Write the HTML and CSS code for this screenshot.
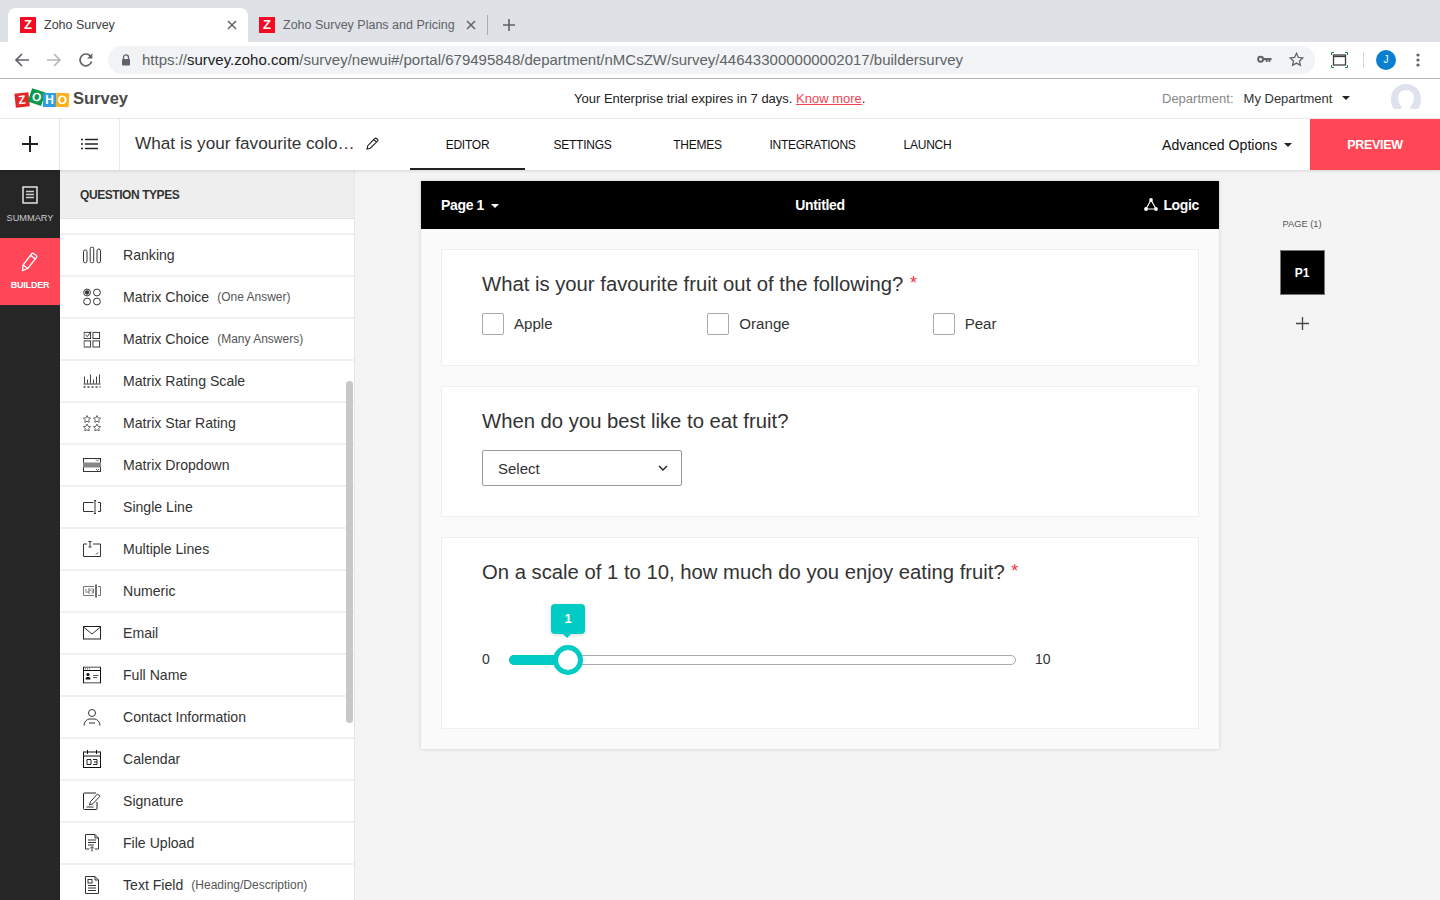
FILE: index.html
```html
<!DOCTYPE html>
<html lang="en">
<head>
  <meta charset="UTF-8">
  <meta name="viewport" content="width=device-width, initial-scale=1.0">
  <title>Zoho Survey</title>
  <link rel="stylesheet" href="styles.css">
</head>
<body>

<div class="tabstrip">
  <div class="tab tab-active">
    <span class="favicon">Z</span>
    <span class="tab-title">Zoho Survey</span>
    <svg class="tab-close" width="10" height="10" viewBox="0 0 10 10"><path d="M1 1l8 8M9 1l-8 8" stroke="#5f6368" stroke-width="1.5"/></svg>
  </div>
  <div class="tab tab-other">
    <span class="favicon">Z</span>
    <span class="tab-title">Zoho Survey Plans and Pricing</span>
    <svg class="tab-close" width="10" height="10" viewBox="0 0 10 10"><path d="M1 1l8 8M9 1l-8 8" stroke="#5f6368" stroke-width="1.5"/></svg>
  </div>
  <span class="tab-divider"></span>
  <svg class="new-tab" width="12" height="12" viewBox="0 0 12 12"><path d="M6 0v12M0 6h12" stroke="#5f6368" stroke-width="1.6"/></svg>
</div>

<div class="toolbar">
  <svg class="tool-icon" width="16" height="16" viewBox="0 0 16 16"><path d="M15 8H2M8 2L2 8l6 6" fill="none" stroke="#5f6368" stroke-width="1.7"/></svg>
  <svg class="tool-icon" width="16" height="16" viewBox="0 0 16 16"><path d="M1 8h13M8 2l6 6-6 6" fill="none" stroke="#b4b6b9" stroke-width="1.7"/></svg>
  <svg class="tool-icon" width="16" height="16" viewBox="0 0 16 16"><path d="M13.6 9.6A5.9 5.9 0 1 1 12.2 3.8" fill="none" stroke="#5f6368" stroke-width="1.7"/><path d="M14.4 1.2v5.4H9z" fill="#5f6368"/></svg>
  <div class="omnibox">
    <svg width="10" height="12" viewBox="0 0 10 12"><path d="M2.5 5V3.4a2.5 2.5 0 0 1 5 0V5" fill="none" stroke="#5f6368" stroke-width="1.3"/><rect x="1" y="5" width="8" height="6.5" rx=".8" fill="#5f6368"/></svg>
    <span class="url">https://<b>survey.zoho.com</b>/survey/newui#/portal/679495848/department/nMCsZW/survey/446433000000002017/buildersurvey</span>
    <svg class="omni-key" width="15" height="9" viewBox="0 0 15 9"><circle cx="3.6" cy="4.2" r="2.5" fill="none" stroke="#5f6368" stroke-width="1.9"/><path d="M6 3h8.5v2.2h-1.2V7h-1.8V5.2h-1V7H8.800V5.2H6z" fill="#5f6368"/></svg>
    <svg class="omni-star" width="15" height="15" viewBox="0 0 15 15"><path d="M7.5 1.3l1.9 4.1 4.4.5-3.3 3 .9 4.4-3.9-2.2-3.9 2.2.9-4.4-3.3-3 4.4-.5z" fill="none" stroke="#5f6368" stroke-width="1.3"/></svg>
  </div>
  <svg class="screen-icon" width="17" height="16" viewBox="0 0 17 16"><rect x="2.5" y="3" width="12" height="10" fill="none" stroke="#3c4043" stroke-width="1.3"/><path d="M2.5 4.5h12" stroke="#3c4043" stroke-width="1.3"/><path d="M0.5 3V.5H3M14 .5h2.5V3M.5 13v2.5H3M14 15.500h2.500V13" fill="none" stroke="#1a8a3a" stroke-width="1"/></svg>
  <span class="tool-divider"></span>
  <span class="avatar">J</span>
  <svg class="dots" width="4" height="14" viewBox="0 0 4 14"><circle cx="2" cy="2" r="1.6" fill="#5f6368"/><circle cx="2" cy="7" r="1.6" fill="#5f6368"/><circle cx="2" cy="12" r="1.6" fill="#5f6368"/></svg>
</div>

<header class="app-header">
  <div class="brand">
    <span class="logo">
      <span class="logo-tile tile-z">Z</span>
      <span class="logo-tile tile-o">O</span>
      <span class="logo-tile tile-h">H</span>
      <span class="logo-tile tile-y">O</span>
    </span>
    <span class="brand-name">Survey</span>
  </div>
  <div class="trial">Your Enterprise trial expires in 7 days. <a href="#">Know more</a>.</div>
  <div class="dept">
    <span class="dept-label">Department:</span>
    <span class="dept-name">My Department</span>
    <span class="caret caret-dept"></span>
  </div>
  <svg class="user-pic" width="30" height="25" viewBox="0 0 30 25"><path d="M15 0C6.500 0 0 6.500 0 15c0 4 1 7.500 3 10h7.500v-2.500C8.500 20.500 7 17 7 13.500 7 9 10.500 6 15 6s8 3 8 7.500c0 3.500-1.500 7-3.500 9V25H27c2-2.500 3-6 3-10C30 6.500 23.500 0 15 0z" fill="#dee2ec"/></svg>
</header>

<nav class="nav">
  <div class="nav-btn">
    <svg width="18" height="18" viewBox="0 0 18 18"><path d="M9 1v16M1 9h16" stroke="#222" stroke-width="2"/></svg>
  </div>
  <div class="nav-btn">
    <svg width="17" height="12" viewBox="0 0 17 12"><path d="M4 1.500h13M4 6h13M4 10.500h13" stroke="#222" stroke-width="1.500"/><path d="M0 1.500h2M0 6h2M0 10.500h2" stroke="#222" stroke-width="1.500"/></svg>
  </div>
  <div class="survey-title">
    <span>What is your favourite colo…</span>
    <svg width="13" height="13" viewBox="0 0 13 13"><path d="M1 12l.8-3.300L8.800 1.500c.5-.5 1.200-.5 1.700 0l1 1c.5.500.5 1.200 0 1.700L4.300 11.200zM7.800 2.500l2.700 2.700" fill="none" stroke="#222" stroke-width="1.100"/></svg>
  </div>
  <ul class="nav-tabs">
    <li class="nav-tab nav-tab-active">EDITOR</li>
    <li class="nav-tab">SETTINGS</li>
    <li class="nav-tab">THEMES</li>
    <li class="nav-tab">INTEGRATIONS</li>
    <li class="nav-tab">LAUNCH</li>
  </ul>
  <div class="advanced">Advanced Options <span class="caret caret-adv"></span></div>
  <div class="preview">PREVIEW</div>
</nav>

<div class="main">
  <aside class="rail">
    <div class="rail-item rail-summary">
      <svg width="16" height="18" viewBox="0 0 16 18"><rect x="1" y="1" width="14" height="16" fill="none" stroke="#fff" stroke-width="1.300"/><path d="M4 5.500h8M4 8.500h8M4 11.500h8" stroke="#ccc" stroke-width="1.300"/></svg>
      <span>SUMMARY</span>
    </div>
    <div class="rail-item rail-item-active">
      <svg width="18" height="20" viewBox="0 0 18 20"><path d="M1.500 18.500l.6-5.500L10.500 2c.6-.8 1.500-.9 2.300-.3l2.200 1.600c.8.600.9 1.500.3 2.300L6.800 16.500zM2.100 13l4.700 3.500M9.500 3.400l4.700 3.400" fill="none" stroke="#fff" stroke-width="1.300"/></svg>
      <span>BUILDER</span>
    </div>
  </aside>

  <section class="panel">
    <div class="panel-head">QUESTION TYPES</div>
    <ul class="type-list">
      <li class="type-row type-row-cut"></li>
      <li class="type-row">
        <svg class="type-icon" width="18" height="17" viewBox="0 0 18 17"><g fill="none" stroke="#333" stroke-width="1"><rect x=".5" y="3.500" width="3.500" height="13" rx="1.700"/><rect x="7.200" y=".5" width="3.500" height="16" rx="1.700"/><rect x="14" y="2.500" width="3.500" height="14" rx="1.700"/></g></svg>
        <span>Ranking</span>
      </li>
      <li class="type-row">
        <svg class="type-icon" width="18" height="18" viewBox="0 0 20 20"><g fill="none" stroke="#333" stroke-width="1.100"><circle cx="4.500" cy="5" r="3.800"/><circle cx="15.500" cy="5" r="3.800"/><circle cx="4.500" cy="15" r="3.800"/><circle cx="15.500" cy="15" r="3.800"/></g><circle cx="4.500" cy="5" r="2.400" fill="#333"/></svg>
        <span>Matrix Choice</span><small>(One Answer)</small>
      </li>
      <li class="type-row">
        <svg class="type-icon" width="17" height="18" viewBox="0 0 18 18"><g fill="none" stroke="#333" stroke-width="1"><rect x=".5" y="2" width="7" height="6.500"/><rect x="10" y="2" width="7" height="6.500"/><rect x=".5" y="11" width="7" height="6.500"/><rect x="10" y="11" width="7" height="6.500"/><path d="M2 4.500l2 2 4-5.500"/></g></svg>
        <span>Matrix Choice</span><small>(Many Answers)</small>
      </li>
      <li class="type-row">
        <svg class="type-icon" width="18" height="15" viewBox="0 0 18 15"><path d="M.5 10.500h17" stroke="#333"/><path d="M1.500 3v7M4.500 6v4M7.500 1v9M10.500 6v4M13.500 3v7M16.500 1v9" stroke="#444"/><path d="M.5 13.500h17" stroke="#444" stroke-width="1.500" stroke-dasharray="2 2"/></svg>
        <span>Matrix Rating Scale</span>
      </li>
      <li class="type-row">
        <svg class="type-icon" width="19" height="17" viewBox="0 0 19 17"><g fill="none" stroke="#666" stroke-width="1"><path d="M4.500 1l1.100 2.300 2.500.3-1.800 1.800.4 2.500-2.200-1.200-2.200 1.200.4-2.500L.9 3.600l2.500-.3z"/><path d="M14.500 1l1.100 2.300 2.500.3-1.800 1.800.4 2.500-2.200-1.200-2.200 1.200.4-2.500-1.800-1.800 2.500-.3z"/><path d="M4.500 9.500l1.100 2.300 2.500.3-1.800 1.800.4 2.500-2.200-1.200-2.200 1.200.4-2.500-1.800-1.800 2.500-.3z"/><path d="M14.500 9.500l1.100 2.300 2.500.3-1.800 1.800.4 2.500-2.200-1.200-2.200 1.200.4-2.500-1.800-1.800 2.500-.3z"/></g></svg>
        <span>Matrix Star Rating</span>
      </li>
      <li class="type-row">
        <svg class="type-icon" width="18" height="14" viewBox="0 0 18 14"><rect x=".5" y=".5" width="17" height="13" fill="none" stroke="#333"/><rect x="0" y="4.500" width="18" height="5" fill="#888"/><path d="M13 1.500l1.500 1.500L16 1.500M13 11l1.500 1.500L16 11" fill="none" stroke="#444" stroke-width=".8"/></svg>
        <span>Matrix Dropdown</span>
      </li>
      <li class="type-row">
        <svg class="type-icon" width="18" height="14" viewBox="0 0 18 14"><path d="M10.500 2.500H.5v9h10M15 2.500h2.500v9H15" fill="none" stroke="#333"/><path d="M11 .5h2M12 .5v13M11 13.500h2" fill="none" stroke="#333"/></svg>
        <span>Single Line</span>
      </li>
      <li class="type-row">
        <svg class="type-icon" width="18" height="16" viewBox="0 0 18 16"><path d="M4 3H.5v12.500h17V3H10M5.500.5h3M7 .5V6M5.500 6h3M13 13.500l2-2" fill="none" stroke="#333"/></svg>
        <span>Multiple Lines</span>
      </li>
      <li class="type-row">
        <svg class="type-icon" width="18" height="14" viewBox="0 0 18 14"><path d="M11 2.500H.5v9H11M15 2.500h2.500v9H15" fill="none" stroke="#777"/><path d="M13 .5v13" stroke="#333" stroke-width="1.400"/><path d="M3 5v4M5 5h2v2H5v2h2M8.500 5H10.500v4H8.500M8.500 7h2" fill="none" stroke="#555" stroke-width=".8"/></svg>
        <span>Numeric</span>
      </li>
      <li class="type-row">
        <svg class="type-icon" width="18" height="14" viewBox="0 0 18 14"><rect x=".5" y=".5" width="17" height="12.500" fill="none" stroke="#222"/><path d="M.5 1l8.500 7 8.500-7" fill="none" stroke="#333"/></svg>
        <span>Email</span>
      </li>
      <li class="type-row">
        <svg class="type-icon" width="18" height="17" viewBox="0 0 18 17"><rect x=".5" y=".5" width="17" height="16" fill="none" stroke="#111"/><path d="M.5 4h17" stroke="#111"/><path d="M2 2.300h1M4 2.300h1M6 2.300h1" stroke="#555"/><circle cx="5" cy="8" r="1.600" fill="#111"/><path d="M2.500 13c0-2 1-2.500 2.500-2.500s2.500.5 2.500 2.500z" fill="#111"/><path d="M10 9h5.500M10 11h4" stroke="#555"/></svg>
        <span>Full Name</span>
      </li>
      <li class="type-row">
        <svg class="type-icon" width="18" height="18" viewBox="0 0 18 18"><circle cx="9" cy="5" r="3.500" fill="none" stroke="#333"/><path d="M1 17.500c0-4 3-6 5-6.500h6c2 .5 5 2.500 5 6.500M6 15h6" fill="none" stroke="#333"/></svg>
        <span>Contact Information</span>
      </li>
      <li class="type-row">
        <svg class="type-icon" width="18" height="18" viewBox="0 0 18 18"><rect x=".5" y="2" width="17" height="15.500" fill="none" stroke="#111"/><path d="M4.500 0v4M13.500 0v4M.5 6h17" stroke="#111"/><path d="M4 9.500h4v5H4zM10 9.500h4v5h-4M14 12h-3" fill="none" stroke="#222"/></svg>
        <span>Calendar</span>
      </li>
      <li class="type-row">
        <svg class="type-icon" width="18" height="18" viewBox="0 0 18 18"><path d="M13 1H1.500a1 1 0 0 0-1 1v14.500a1 1 0 0 0 1 1H13a1 1 0 0 0 1-1V10" fill="none" stroke="#222"/><path d="M6.500 13l1-3.500 7-7.500 2.500 2.200-7 7.500zM3.500 15h7" fill="none" stroke="#333"/></svg>
        <span>Signature</span>
      </li>
      <li class="type-row">
        <svg class="type-icon" width="14" height="18" viewBox="0 0 14 18"><path d="M4 15H.5V.5H10L13.500 4v11H10M10 .5V4h3.500M3 6h8M3 8.500h8M3 11h6" fill="none" stroke="#333"/><path d="M7 17.500V13M5 14.500l2-2 2 2" fill="none" stroke="#333"/></svg>
        <span>File Upload</span>
      </li>
      <li class="type-row">
        <svg class="type-icon" width="14" height="18" viewBox="0 0 14 18"><path d="M.5.5H10L13.500 4v13.500H.5zM10 .5V4h3.500M3 9.500h8M3 12h8M3 14.500h8" fill="none" stroke="#333"/><rect x="3" y="3.500" width="4" height="3.500" fill="none" stroke="#333"/></svg>
        <span>Text Field</span><small>(Heading/Description)</small>
      </li>
    </ul>
    <div class="panel-scroll"></div>
  </section>

  <section class="canvas">
    <div class="page">
      <div class="page-bar">
        <div class="page-name">Page 1 <span class="caret caret-page"></span></div>
        <div class="page-title">Untitled</div>
        <div class="page-logic">
          <svg width="14" height="13" viewBox="0 0 14 13"><path d="M7 2L2 11h10z" fill="none" stroke="#fff" stroke-width="1.100"/><circle cx="7" cy="2" r="1.900" fill="#fff"/><circle cx="2" cy="11" r="1.900" fill="#fff"/><circle cx="12" cy="11" r="1.900" fill="#fff"/></svg>
          Logic
        </div>
      </div>
      <div class="questions">
        <div class="question q-fruit">
          <h3>What is your favourite fruit out of the following? <em>*</em></h3>
          <div class="options">
            <label class="option"><span class="check"></span>Apple</label>
            <label class="option"><span class="check"></span>Orange</label>
            <label class="option"><span class="check"></span>Pear</label>
          </div>
        </div>
        <div class="question q-when">
          <h3>When do you best like to eat fruit?</h3>
          <div class="select">
            <span>Select</span>
            <svg width="10" height="6" viewBox="0 0 10 6"><path d="M1 1l4 4 4-4" fill="none" stroke="#222" stroke-width="1.400"/></svg>
          </div>
        </div>
        <div class="question q-scale">
          <h3>On a scale of 1 to 10, how much do you enjoy eating fruit? <em>*</em></h3>
          <div class="slider">
            <span class="slider-min">0</span>
            <div class="slider-track">
              <div class="slider-fill"></div>
              <div class="slider-thumb"></div>
              <div class="slider-tip">1</div>
            </div>
            <span class="slider-max">10</span>
          </div>
        </div>
      </div>
    </div>
    <aside class="pages">
      <div class="pages-label">PAGE (1)</div>
      <div class="page-thumb">P1</div>
      <svg class="page-add" width="13" height="13" viewBox="0 0 13 13"><path d="M6.500 0v13M0 6.500h13" stroke="#444" stroke-width="1.300"/></svg>
    </aside>
  </section>
</div>

</body>
</html>
```

FILE: styles.css
```css
* {
  box-sizing: border-box;
}
html, body {
  height: 900px;
  overflow: hidden;
}
body {
  margin: 0;
  font-family: "Liberation Sans", Arial, sans-serif;
  background: #fff;
  color: #333;
}
ul {
  list-style: none;
  margin: 0;
  padding: 0;
}
svg {
  flex: none;
  display: block;
}

/* browser chrome */
.tabstrip {
  height: 42px;
  background: #dee1e6;
  display: flex;
  align-items: flex-end;
  padding-left: 8px;
}
.tab {
  height: 34px;
  display: flex;
  align-items: center;
  font-size: 12.5px;
  color: #3c4043;
}
.tab-active {
  width: 240px;
  background: #fff;
  border-radius: 8px 8px 0 0;
  padding: 0 11px 0 12px;
}
.tab-other {
  width: 239px;
  padding: 0 11px 0 11px;
  color: #5f6368;
}
.favicon {
  width: 16px;
  height: 16px;
  background: #f40a22;
  color: #fff;
  font-size: 13px;
  font-weight: bold;
  line-height: 16px;
  text-align: center;
  flex: none;
}
.tab-title {
  margin-left: 8px;
  flex: 1;
  white-space: nowrap;
}
.tab-divider {
  width: 1px;
  height: 20px;
  background: #a8abb0;
  margin-bottom: 7px;
}
.new-tab {
  margin: 0 0 11px 15px;
}

.toolbar {
  height: 37px;
  background: #fff;
  border-bottom: 1px solid #b5b5b5;
  display: flex;
  align-items: center;
  padding: 0 0 1px 14px;
}
.tool-icon {
  margin-right: 16px;
}
.toolbar .tool-icon:nth-child(3) {
  margin-right: 14px;
}
.omnibox {
  width: 1207px;
  height: 28px;
  background: #f1f3f4;
  border-radius: 14px;
  display: flex;
  align-items: center;
  padding-left: 13px;
  flex: none;
}
.url {
  margin-left: 11px;
  flex: 1;
  font-size: 15px;
  color: #5f6368;
  white-space: nowrap;
}
.url b {
  font-weight: normal;
  color: #202124;
}
.omni-star {
  margin: 0 11px 0 17px;
}
.screen-icon {
  margin-left: 16px;
}
.tool-divider {
  width: 1px;
  height: 16px;
  background: #d5d7da;
  margin: 0 12px 0 15px;
}
.avatar {
  width: 20px;
  height: 20px;
  border-radius: 50%;
  background: #0a7fd0;
  color: #fff;
  font-size: 10px;
  line-height: 20px;
  text-align: center;
  flex: none;
}
.dots {
  margin-left: 20px;
}

/* app header */
.app-header {
  height: 40px;
  border-bottom: 1px solid #eee;
  display: flex;
  align-items: center;
  padding: 0 19px 0 15px;
}
.brand {
  width: 295px;
  display: flex;
  align-items: center;
}
.logo {
  display: flex;
  align-items: center;
  width: 54px;
}
.logo-tile {
  width: 14px;
  height: 14px;
  color: #fff;
  font-size: 12px;
  font-weight: bold;
  line-height: 14px;
  text-align: center;
  flex: none;
}
.tile-z {
  background: #e42527;
  transform: rotate(-6deg) translateY(1px);
}
.tile-o {
  background: #089949;
  transform: rotate(18deg) translateY(-2px);
}
.tile-h {
  background: #2f9ee0;
  width: 13px;
  transform: translateY(1px);
}
.tile-y {
  background: #f9b21d;
  width: 13px;
  transform: rotate(3deg) translateY(1px);
}
.brand-name {
  margin-left: 4px;
  font-size: 16.5px;
  font-weight: bold;
  color: #4a4a4a;
}
.trial {
  width: 852px;
  padding-left: 264px;
  font-size: 13px;
  color: #222;
}
.trial a {
  color: #f04452;
}
.dept {
  flex: 1;
  display: flex;
  align-items: center;
  font-size: 13px;
}
.dept-label {
  color: #888;
}
.dept-name {
  margin-left: 10px;
  color: #333;
}
.caret {
  display: inline-block;
  width: 0;
  height: 0;
  border-left: 4px solid transparent;
  border-right: 4px solid transparent;
  border-top: 4px solid #222;
}
.caret-dept {
  margin-left: 10px;
  margin-bottom: 2px;
}
.user-pic {
  align-self: flex-start;
  margin-top: 5px;
}

/* survey nav */
.nav {
  height: 51px;
  display: flex;
  align-items: stretch;
  background: #fff;
  position: relative;
  z-index: 2;
  box-shadow: 0 1px 3px rgba(0, 0, 0, 0.12);
}
.nav-btn {
  width: 60px;
  border-right: 1px solid #e8e8e8;
  display: flex;
  align-items: center;
  justify-content: center;
  padding-bottom: 1px;
}
.survey-title {
  width: 290px;
  padding: 0 0 2px 15px;
  display: flex;
  align-items: center;
  gap: 11px;
  font-size: 17.2px;
  color: #333;
  white-space: nowrap;
}
.nav-tabs {
  display: flex;
  width: 638px;
}
.nav-tab {
  display: flex;
  align-items: center;
  justify-content: center;
  width: 115px;
  font-size: 12px;
  letter-spacing: -0.25px;
  color: #111;
}
.nav-tab-active {
  border-bottom: 2px solid #222;
  padding-top: 2px;
}
.advanced {
  width: 262px;
  padding-left: 114px;
  display: flex;
  align-items: center;
  gap: 7px;
  font-size: 14.1px;
  color: #111;
  white-space: nowrap;
}
.preview {
  width: 130px;
  background: #ff4757;
  color: #fff;
  font-size: 12.5px;
  font-weight: bold;
  letter-spacing: -0.3px;
  display: flex;
  align-items: center;
  justify-content: center;
}

/* sidebars */
.main {
  height: 730px;
  display: flex;
}
.rail {
  width: 60px;
  background: #262626;
  flex: none;
}
.rail-item {
  height: 67px;
  display: flex;
  flex-direction: column;
  align-items: center;
  padding-top: 16px;
  gap: 8px;
  font-size: 9.2px;
  color: #ccc;
}
.rail-summary {
  height: 68px;
  gap: 9px;
}
.rail-item-active {
  background: #ff4757;
  color: #fff;
  font-size: 9px;
  font-weight: bold;
  letter-spacing: -0.2px;
  padding-top: 14px;
}
.panel {
  width: 295px;
  flex: none;
  background: #fff;
  border-right: 1px solid #e6e6e6;
  position: relative;
  overflow: hidden;
}
.panel-head {
  height: 49px;
  background: #eee;
  border-bottom: 1px solid #e2e2e2;
  padding: 18px 0 0 20px;
  font-size: 12px;
  font-weight: bold;
  letter-spacing: -0.43px;
  color: #333;
}
.type-row {
  height: 42px;
  border-bottom: 2px solid #f0f0f0;
  display: flex;
  align-items: center;
  padding-left: 63px;
  position: relative;
  font-size: 14.1px;
  color: #333;
  white-space: nowrap;
}
.type-row-cut {
  height: 16px;
}
.type-row small {
  margin-left: 8px;
  font-size: 12px;
  color: #555;
}
.type-icon {
  position: absolute;
  left: 32px;
  top: 50%;
  transform: translate(-50%, -50%);
}
.panel-scroll {
  position: absolute;
  right: 1px;
  top: 211px;
  width: 7px;
  height: 342px;
  border-radius: 4px;
  background: #c8c8c8;
}

/* survey canvas */
.canvas {
  flex: 1;
  background: #f4f4f4;
  display: flex;
  align-items: flex-start;
  padding: 11px 0 0 66px;
}
.page {
  width: 798px;
  height: 568px;
  flex: none;
  background: #fafafa;
  box-shadow: 0 0 4px rgba(0, 0, 0, 0.15);
}
.page-bar {
  height: 48px;
  background: #000;
  color: #fff;
  display: grid;
  grid-template-columns: 1fr auto 1fr;
  align-items: center;
  padding: 0 20px 1px;
  font-size: 14px;
  font-weight: bold;
  letter-spacing: -0.35px;
}
.caret-page {
  border-top-color: #fff;
  margin-left: 3px;
  vertical-align: middle;
}
.page-logic {
  justify-self: end;
  display: flex;
  align-items: center;
  gap: 5px;
}
.questions {
  padding: 20px;
  display: flex;
  flex-direction: column;
  gap: 20px;
}
.question {
  background: #fff;
  border: 1px solid #efefef;
  padding: 21px 40px 0;
}
.question h3 {
  margin: 0;
  font-size: 20.27px;
  font-weight: normal;
  color: #333;
  line-height: 26px;
}
.question em {
  color: #f0323c;
  font-style: normal;
  font-size: 18px;
  line-height: 0;
  vertical-align: 2px;
  margin-left: 1px;
}
.q-fruit {
  height: 117px;
}
.q-when {
  height: 131px;
}
.q-scale {
  height: 192px;
}
.options {
  display: flex;
  margin-top: 16px;
}
.option {
  width: 225.5px;
  display: flex;
  align-items: flex-start;
  gap: 10px;
  font-size: 15.1px;
  line-height: 21px;
  color: #333;
}
.check {
  width: 22px;
  height: 22px;
  border: 1px solid #aaa;
  border-radius: 2px;
  background: #fff;
}
.select {
  width: 200px;
  height: 36px;
  margin-top: 16px;
  border: 1px solid #999;
  border-radius: 2px;
  display: flex;
  align-items: center;
  justify-content: space-between;
  padding: 0 13px 0 15px;
  font-size: 15px;
  color: #333;
}
.slider {
  display: flex;
  align-items: center;
  margin-top: 66px;
  font-size: 14px;
  color: #333;
}
.slider-min {
  width: 27px;
  padding-bottom: 2px;
}
.slider-track {
  width: 507px;
  height: 10px;
  border: 1px solid #aaa;
  border-radius: 5px;
  position: relative;
}
.slider-fill {
  position: absolute;
  left: -1px;
  top: -1px;
  width: 52px;
  height: 10px;
  background: #00cbc4;
  border-radius: 5px 0 0 5px;
}
.slider-thumb {
  position: absolute;
  left: 43px;
  top: -11px;
  width: 30px;
  height: 30px;
  border-radius: 50%;
  background: #fff;
  border: 5px solid #00cbc4;
}
.slider-tip {
  position: absolute;
  left: 41px;
  top: -52px;
  width: 34px;
  height: 30px;
  background: #00cbc4;
  border-radius: 4px;
  box-shadow: 0 1px 4px rgba(0, 0, 0, 0.15);
  color: #fff;
  font-size: 13px;
  font-weight: bold;
  line-height: 30px;
  text-align: center;
}
.slider-tip::after {
  content: "";
  position: absolute;
  left: 12px;
  bottom: -4px;
  border-left: 4px solid transparent;
  border-right: 4px solid transparent;
  border-top: 4px solid #00cbc4;
}
.slider-max {
  margin-left: 19px;
  padding-bottom: 2px;
}

/* page list */
.pages {
  flex: 1;
  display: flex;
  flex-direction: column;
  align-items: center;
  padding-top: 38px;
  margin-right: 55px;
}
.pages-label {
  font-size: 9.3px;
  color: #555;
}
.page-thumb {
  width: 45px;
  height: 45px;
  margin-top: 21px;
  background: #000;
  border: 1px solid #777;
  color: #fff;
  font-size: 12px;
  font-weight: bold;
  display: flex;
  align-items: center;
  justify-content: center;
}
.page-add {
  margin-top: 22px;
}
```
